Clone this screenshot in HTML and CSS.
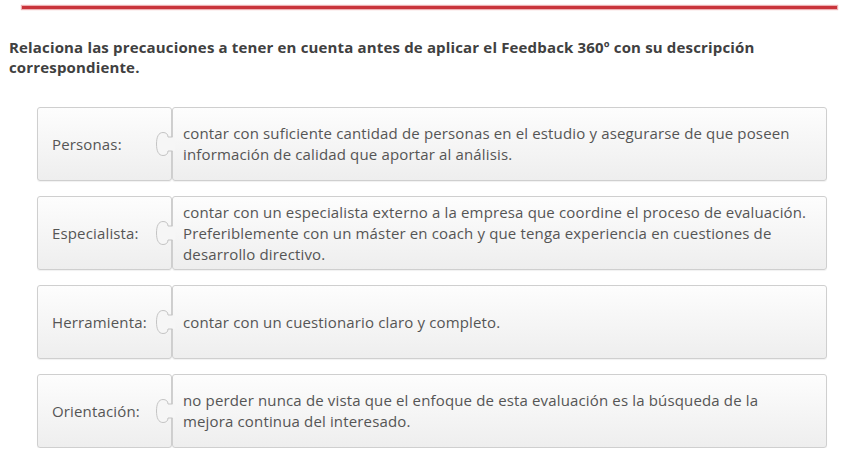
FILE: index.html
```html
<!DOCTYPE html>
<html lang="es">
<head>
<meta charset="utf-8">
<title>Feedback 360</title>
<link rel="stylesheet" href="styles.css">
</head>
<body>
<div class="page">
  <div class="topbar"></div>
  <h2 class="question">Relaciona las precauciones a tener en cuenta antes de aplicar el Feedback 360º con su descripción correspondiente.</h2>
  <div class="pairs">
    <div class="pair">
      <div class="term">Personas:</div>
      <div class="def">
        <svg class="tab" width="20" height="26" viewBox="0 0 20 26"><path class="tab-fill" d="M20 6 L13 6 C13 3 11 1.5 8 1.5 C3.5 1.5 1.5 6 1.5 13 C1.5 20 3.5 24.5 8 24.5 C11 24.5 13 23 13 20 L20 20 Z"/><path class="tab-line" d="M17.5 6 L13 6 C13 3 11 1.5 8 1.5 C3.5 1.5 1.5 6 1.5 13 C1.5 20 3.5 24.5 8 24.5 C11 24.5 13 23 13 20 L17.5 20"/></svg>
        <p>contar con suficiente cantidad de personas en el estudio y asegurarse de que poseen información de calidad que aportar al análisis.</p>
      </div>
    </div>
    <div class="pair">
      <div class="term">Especialista:</div>
      <div class="def">
        <svg class="tab" width="20" height="26" viewBox="0 0 20 26"><path class="tab-fill" d="M20 6 L13 6 C13 3 11 1.5 8 1.5 C3.5 1.5 1.5 6 1.5 13 C1.5 20 3.5 24.5 8 24.5 C11 24.5 13 23 13 20 L20 20 Z"/><path class="tab-line" d="M17.5 6 L13 6 C13 3 11 1.5 8 1.5 C3.5 1.5 1.5 6 1.5 13 C1.5 20 3.5 24.5 8 24.5 C11 24.5 13 23 13 20 L17.5 20"/></svg>
        <p>contar con un especialista externo a la empresa que coordine el proceso de evaluación. Preferiblemente con un máster en coach y que tenga experiencia en cuestiones de desarrollo directivo.</p>
      </div>
    </div>
    <div class="pair">
      <div class="term">Herramienta:</div>
      <div class="def">
        <svg class="tab" width="20" height="26" viewBox="0 0 20 26"><path class="tab-fill" d="M20 6 L13 6 C13 3 11 1.5 8 1.5 C3.5 1.5 1.5 6 1.5 13 C1.5 20 3.5 24.5 8 24.5 C11 24.5 13 23 13 20 L20 20 Z"/><path class="tab-line" d="M17.5 6 L13 6 C13 3 11 1.5 8 1.5 C3.5 1.5 1.5 6 1.5 13 C1.5 20 3.5 24.5 8 24.5 C11 24.5 13 23 13 20 L17.5 20"/></svg>
        <p>contar con un cuestionario claro y completo.</p>
      </div>
    </div>
    <div class="pair">
      <div class="term">Orientación:</div>
      <div class="def">
        <svg class="tab" width="20" height="26" viewBox="0 0 20 26"><path class="tab-fill" d="M20 6 L13 6 C13 3 11 1.5 8 1.5 C3.5 1.5 1.5 6 1.5 13 C1.5 20 3.5 24.5 8 24.5 C11 24.5 13 23 13 20 L20 20 Z"/><path class="tab-line" d="M17.5 6 L13 6 C13 3 11 1.5 8 1.5 C3.5 1.5 1.5 6 1.5 13 C1.5 20 3.5 24.5 8 24.5 C11 24.5 13 23 13 20 L17.5 20"/></svg>
        <p>no perder nunca de vista que el enfoque de esta evaluación es la búsqueda de la mejora continua del interesado.</p>
      </div>
    </div>
  </div>
</div>
</body>
</html>
```

FILE: styles.css
```css
html, body {
  margin: 0;
  padding: 0;
  background: #ffffff;
}

.page {
  font-family: "Open Sans", "DejaVu Sans", sans-serif;
  padding: 6px 11px 0 9px;
}

.topbar {
  height: 3px;
  margin: 0 0 0 13px;
  background: #c9343b;
  box-shadow: 0 0 1px 1px rgba(226, 110, 115, 0.55);
}

.question {
  margin: 28px 0 0 0;
  font-size: 15px;
  line-height: 20px;
  font-weight: 700;
  letter-spacing: 0.16px;
  color: #404040;
}

.pairs {
  display: flex;
  flex-direction: column;
  gap: 15px;
  margin: 30px 0 0 28px;
}

.pair {
  display: flex;
  height: 74px;
}

.term,
.def {
  box-sizing: border-box;
  border: 1px solid #cfcfcf;
  border-radius: 3px;
  background: linear-gradient(#fdfdfd, #eeeeee);
  box-shadow: 0 1px 1px rgba(0, 0, 0, 0.06);
  color: #555555;
  font-size: 15px;
  letter-spacing: 0.15px;
  display: flex;
  align-items: center;
}

.term {
  width: 135px;
  flex: none;
  padding-left: 14px;
}

.def {
  position: relative;
  width: 655px;
  padding: 0 18px 0 10px;
}

.def p {
  margin: 0;
  line-height: 21px;
}

.tab {
  position: absolute;
  left: -18px;
  top: 50%;
  margin-top: -13px;
  overflow: visible;
}

.tab-fill {
  fill: #f6f6f6;
}

.tab-line {
  fill: none;
  stroke: #c4c4c4;
  stroke-width: 1;
}
```
